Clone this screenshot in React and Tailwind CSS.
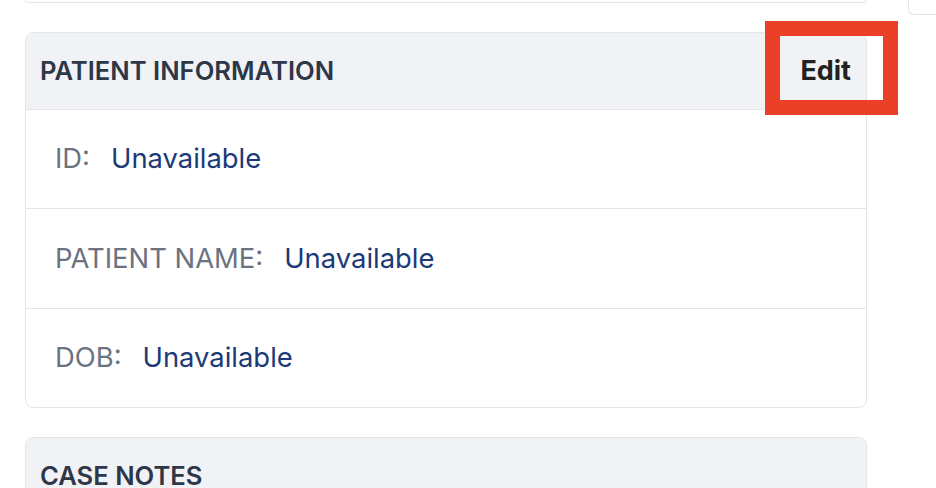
const rows = [
  { label: "ID:", value: "Unavailable", h: "h-[99px] border-b" },
  { label: "PATIENT NAME:", value: "Unavailable", h: "h-[100px] border-b" },
  { label: "DOB:", value: "Unavailable", h: "h-[98px]" },
];

const App = () => {
  return (
    <div
      className="relative w-[936px] h-[488px] overflow-hidden bg-white"
      style={{ fontFamily: "Inter, 'Noto Sans', sans-serif" }}
    >
      <div className="flex">
        {/* Main column */}
        <div className="ml-[25px] w-[842px] shrink-0">
          {/* Tail of the previous card */}
          <div className="h-[3px] border-x border-b border-[#e2e5ea] rounded-b-md" />

          {/* Patient information */}
          <div className="mt-[29px] border border-[#e2e5ea] rounded-lg overflow-hidden">
            <div className="h-[77px] bg-[#f1f2f6] border-b border-[#e2e5ea] flex items-center justify-between pl-[14px] pr-[15px]">
              <h3 className="text-[25.6px] font-semibold text-[#2d3748]">PATIENT INFORMATION</h3>
              <button className="text-[27px] font-bold text-[#222222]">Edit</button>
            </div>
            {rows.map((row, i) => (
              <div
                key={i}
                className={`flex items-center pl-[29px] text-[27.4px] border-[#e2e5ea] ${row.h}`}
              >
                <span className="text-[#6b7280]">{row.label}</span>
                <span className="ml-[21px] text-[#1c3a78]">{row.value}</span>
              </div>
            ))}
          </div>

          {/* Case notes */}
          <div className="mt-[29px] border border-[#e2e5ea] rounded-lg overflow-hidden">
            <div className="h-[77px] bg-[#f1f2f6] flex items-center pl-[14px]">
              <h3 className="text-[25.6px] font-semibold text-[#2d3748]">CASE NOTES</h3>
            </div>
          </div>
        </div>

        {/* Side panel edge */}
        <div className="ml-[41px] flex-1 h-[15px] border-l border-b border-[#e2e5ea] rounded-bl-md" />
      </div>

      {/* Highlight annotation */}
      <div className="absolute left-[765px] top-[21px] w-[133px] h-[94px] border-[15px] border-[#ea4027]" />
    </div>
  );
};

export default App;
